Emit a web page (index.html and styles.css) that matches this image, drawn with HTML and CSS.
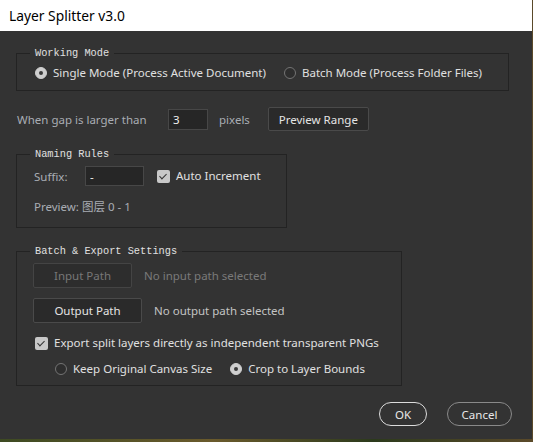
FILE: index.html
```html
<!DOCTYPE html>
<html lang="en">
<head>
  <meta charset="UTF-8">
  <meta name="viewport" content="width=device-width, initial-scale=1.0">
  <title>Layer Splitter v3.0</title>
  <link rel="stylesheet" href="styles.css">
</head>
<body>
  <div class="dialog">
    <div class="titlebar">Layer Splitter v3.0</div>

    <div class="content">
      <fieldset class="group group-mode">
        <legend>Working Mode</legend>
        <div class="row">
          <label class="radio checked"><span class="dot"></span>Single Mode (Process Active Document)</label>
          <label class="radio mode-batch"><span class="dot"></span>Batch Mode (Process Folder Files)</label>
        </div>
      </fieldset>

      <div class="row gap-row">
        <span class="label gap-label">When gap is larger than</span>
        <input type="text" class="field gap-field" value="3">
        <span class="label unit">pixels</span>
        <button class="btn preview-btn">Preview Range</button>
      </div>

      <fieldset class="group group-naming">
        <legend>Naming Rules</legend>
        <div class="row">
          <span class="label suffix-label">Suffix:</span>
          <input type="text" class="field suffix-field" value="-">
          <label class="check checked auto-inc"><span class="box"></span>Auto Increment</label>
        </div>
        <div class="label preview-line">Preview: <span class="cjk">图层</span> 0 - 1</div>
      </fieldset>

      <fieldset class="group group-batch">
        <legend>Batch &amp; Export Settings</legend>
        <div class="row path-row">
          <button class="btn path-btn input-btn" disabled>Input Path</button>
          <span class="path-text muted">No input path selected</span>
        </div>
        <div class="row path-row">
          <button class="btn path-btn output-btn">Output Path</button>
          <span class="path-text">No output path selected</span>
        </div>
        <div class="row export-row">
          <label class="check checked"><span class="box"></span>Export split layers directly as independent transparent PNGs</label>
        </div>
        <div class="row canvas-row">
          <label class="radio"><span class="dot"></span>Keep Original Canvas Size</label>
          <label class="radio checked crop"><span class="dot"></span>Crop to Layer Bounds</label>
        </div>
      </fieldset>

      <div class="footer">
        <button class="pill ok">OK</button>
        <button class="pill">Cancel</button>
      </div>
    </div>
  </div>
</body>
</html>
```

FILE: styles.css
```css
body {
  margin: 0;
  width: 533px;
  height: 442px;
  overflow: hidden;
  background: linear-gradient(90deg, #3d4a22, #6a5a2c 40%, #2c3a1c 70%, #5b4a2a);
  font-family: "Noto Sans", "Noto Sans CJK SC", sans-serif;
  font-size: 11.5px;
  color: #dcdcdc;
}

.dialog {
  width: 532px;
  height: 439px;
  background: #333333;
  display: flex;
  flex-direction: column;
}

.titlebar {
  height: 31px;
  line-height: 31px;
  padding-left: 9px;
  background: #ffffff;
  color: #000;
  font-size: 13.8px;
}

.content {
  padding: 0 20px 0 16px;
}

.row {
  display: flex;
  align-items: center;
}

/* group boxes */
.group {
  margin: 0;
  border: 1px solid #232323;
  padding: 0 0 0 17px;
  min-width: 0;
}

.group legend {
  margin-left: -4px;
  padding: 0 5px;
  font-family: "Liberation Mono", monospace;
  font-size: 10.3px;
  line-height: 12px;
  color: #e0e0e0;
}

.group-mode {
  margin-top: 16px;
  width: 474px;
  padding-top: 6px;
  padding-bottom: 9px;
}

.group-mode .row {
  padding-left: 1px;
}

.group-naming {
  margin-top: 17px;
  width: 252px;
  padding-top: 6px;
  padding-bottom: 12px;
}

.group-batch {
  margin-top: 17px;
  width: 368px;
  padding-left: 16px;
  padding-top: 6px;
  padding-bottom: 8px;
}

.group-batch legend {
  margin-left: -3px;
}

/* radios and checkboxes */
.radio, .check {
  display: flex;
  align-items: center;
  line-height: 16px;
  color: #e0e0e0;
}

.radio .dot {
  width: 10px;
  height: 10px;
  border: 1px solid #747474;
  border-radius: 50%;
  background: #2e2e2e;
  margin-right: 6px;
  position: relative;
}

.radio.checked .dot {
  background: #cfcfcf;
  border-color: #cfcfcf;
}

.radio.checked .dot::after {
  content: "";
  position: absolute;
  left: 3px;
  top: 3px;
  width: 4px;
  height: 4px;
  border-radius: 50%;
  background: #3a3a3a;
}

.mode-batch {
  margin-left: 18px;
}

.check .box {
  width: 13px;
  height: 13px;
  border-radius: 2px;
  background: #c8c8c8;
  margin-right: 6px;
  position: relative;
}

.check.checked .box::after {
  content: "";
  position: absolute;
  left: 4px;
  top: 2px;
  width: 3px;
  height: 6px;
  border: solid #333;
  border-width: 0 1.5px 1.5px 0;
  transform: rotate(45deg);
}

/* gap row */
.label {
  color: #a9adb3;
}

.gap-row {
  margin-top: 16px;
  height: 24px;
  padding-left: 1px;
}

.gap-label {
  width: 151px;
}

.field {
  box-sizing: border-box;
  height: 21px;
  padding: 0 4px;
  border: 1px solid #474747;
  background: #262626;
  color: #f0f0f0;
  font-family: inherit;
  font-size: 11.5px;
  outline: none;
}

.gap-field {
  width: 40px;
}

.unit {
  margin-left: 11px;
}

.btn {
  box-sizing: border-box;
  height: 24px;
  padding: 0;
  border: 1px solid #4a4a4a;
  border-radius: 2px;
  background: #2a2a2a;
  color: #e4e4e4;
  font-family: inherit;
  font-size: 11.5px;
}

.preview-btn {
  width: 101px;
  margin-left: 18px;
}

/* naming rules */
.suffix-label {
  width: 51px;
}

.suffix-field {
  width: 59px;
  height: 20px;
}

.auto-inc {
  margin-left: 13px;
}

.preview-line {
  margin-top: 12px;
  line-height: 16px;
}

.cjk {
  font-family: "Noto Sans CJK SC", sans-serif;
}

/* batch & export */
.path-row + .path-row {
  margin-top: 10px;
}

.path-btn {
  height: 25px;
}

.input-btn {
  width: 99px;
  color: #777;
  background: #2d2d2d;
  border-color: #444;
}

.output-btn {
  width: 109px;
}

.path-text {
  margin-left: 12px;
  color: #c4c4c4;
}

.path-text.muted {
  color: #7a7a7a;
}

.export-row {
  margin-top: 12px;
  padding-left: 2px;
}

.canvas-row {
  margin-top: 10px;
  padding-left: 22px;
}

.crop {
  margin-left: 18px;
}

/* dialog buttons */
.footer {
  display: flex;
  justify-content: flex-end;
  gap: 20px;
  margin-top: 16px;
}

.pill {
  box-sizing: border-box;
  height: 24px;
  border: 1px solid #8a8a8a;
  border-radius: 12px;
  background: #333;
  color: #e8e8e8;
  font-family: inherit;
  font-size: 11.5px;
  width: 65px;
  padding: 0;
}

.pill.ok {
  width: 48px;
  border-color: #dcdcdc;
}
```
